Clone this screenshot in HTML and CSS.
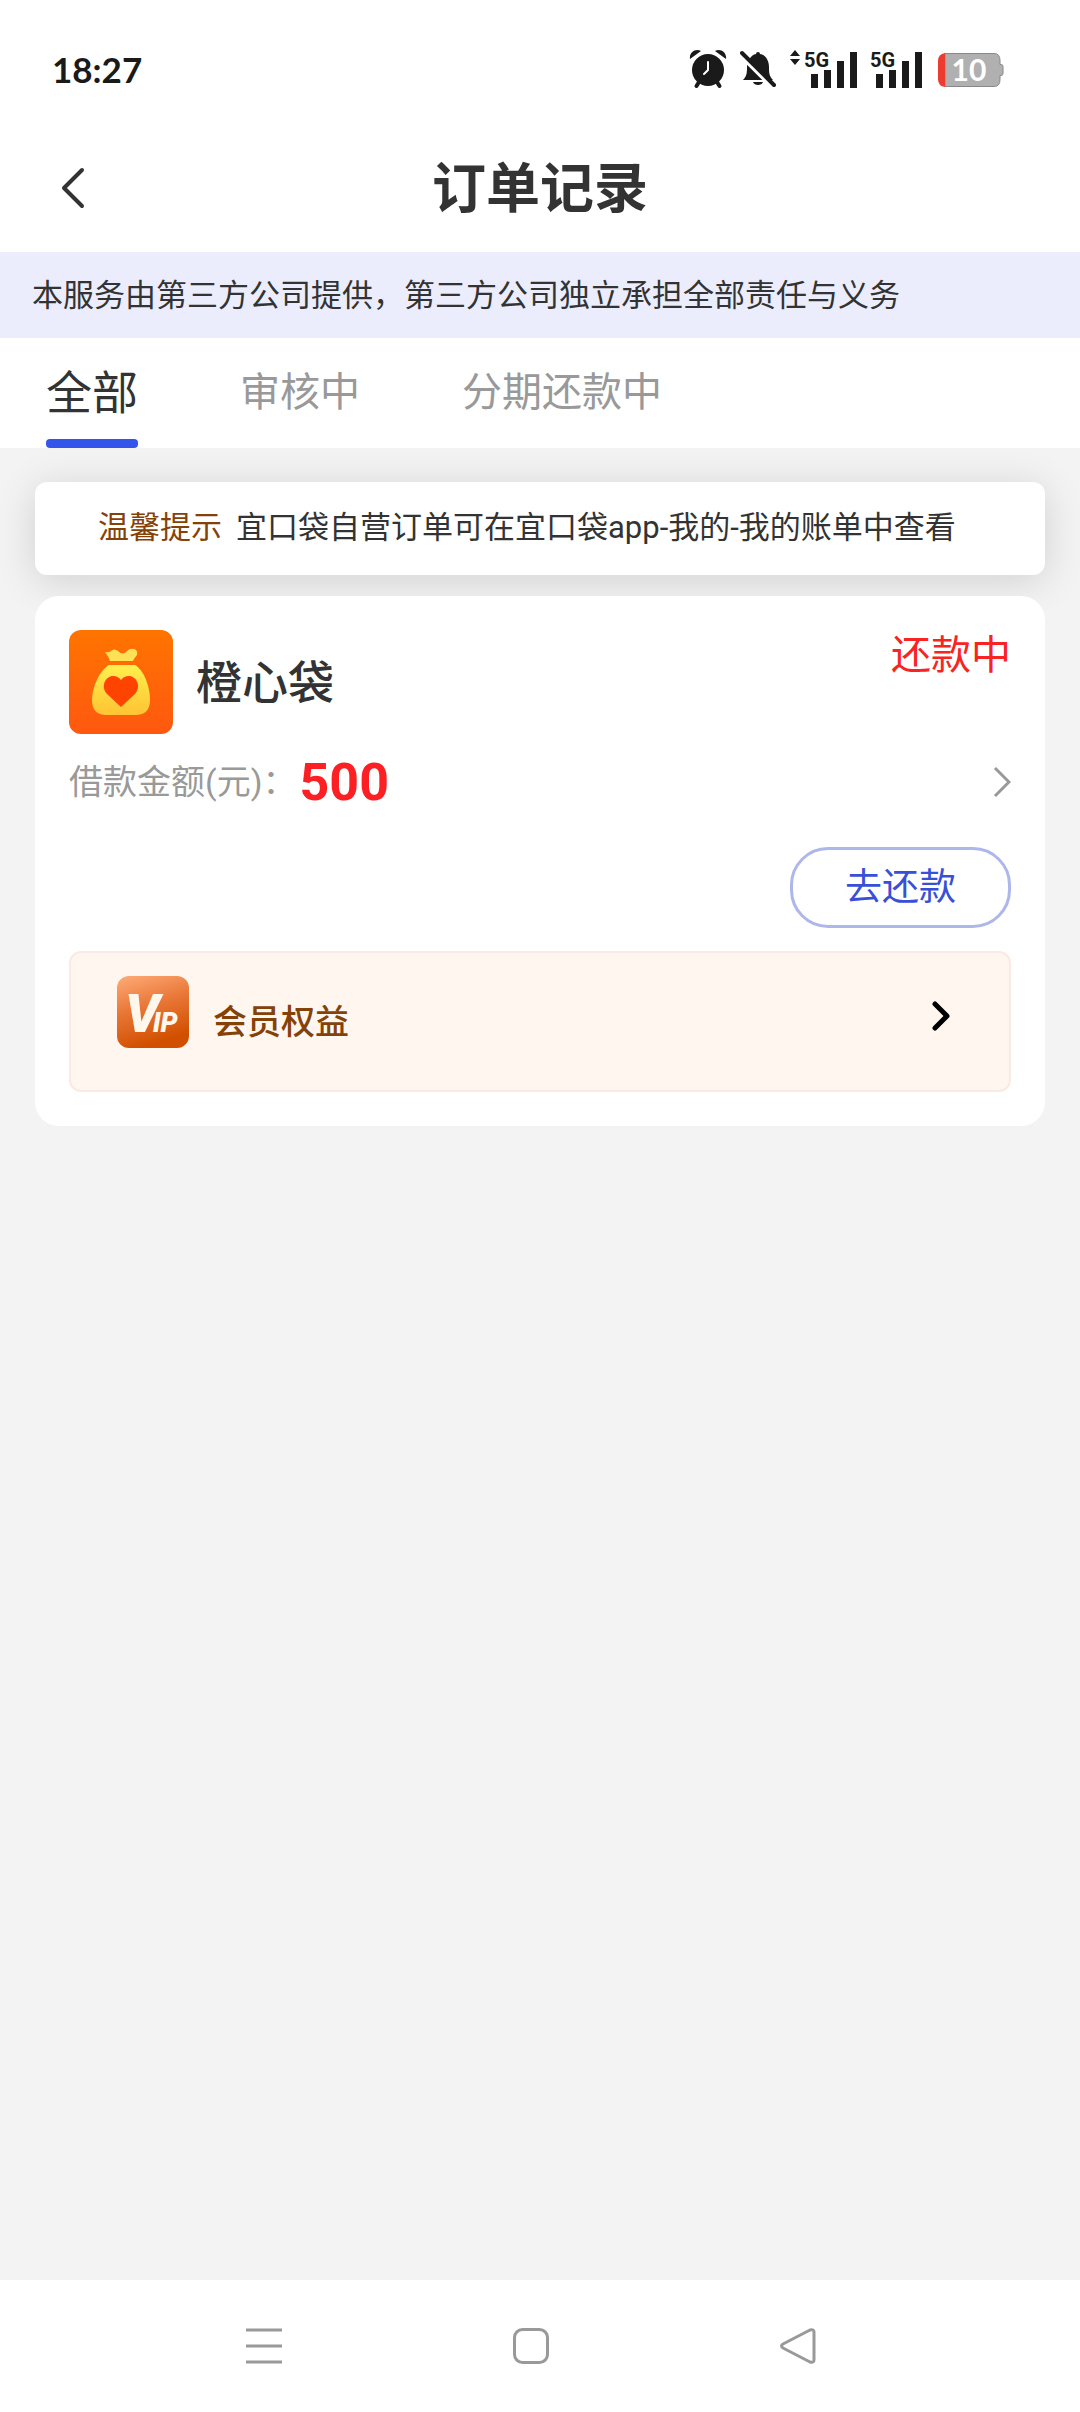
FILE: index.html
```html
<!DOCTYPE html>
<html lang="zh-CN">
<head>
  <meta charset="utf-8">
  <meta name="viewport" content="width=device-width, initial-scale=1">
  <title>订单记录</title>
  <link rel="stylesheet" href="styles.css">
</head>
<body>
  <div class="status-bar">
    <time class="clock">18:27</time>
    <div class="status-icons">
      <svg width="38" height="40" viewBox="0 0 38 40" aria-label="闹钟">
        <g fill="none" stroke="#1a1a1a" stroke-width="4" stroke-linecap="round">
          <path d="M10 33 7.500 37M28 33l2.500 4"/>
        </g>
        <path fill="#1a1a1a" d="M1 10C0 4 6-1 12 2zM37 10c1-6-5-11-11-8z"/>
        <circle cx="19" cy="21" r="16" fill="#1a1a1a"/>
        <path d="M19 13v8l-4 4" fill="none" stroke="#fff" stroke-width="2" stroke-linecap="round"/>
      </svg>
      <svg width="36" height="40" viewBox="0 0 36 40" aria-label="静音">
        <path fill="#1a1a1a" d="M3 31c4-4 4-8 4-13 0-6 4-12 9-13a2 2 0 0 1 4 0c6 1 9 7 9 13 0 5 0 9 4 13zM13 33h10c-1 4-9 4-10 0z"/>
        <path d="M1 7 32 38" stroke="#fff" stroke-width="4"/>
        <path d="M2 4 34 36" stroke="#1a1a1a" stroke-width="4" stroke-linecap="round"/>
      </svg>
      <svg width="68" height="56" viewBox="0 -8 68 56" aria-label="5G 信号">
        <path fill="#1a1a1a" d="M1 7 6 1l5 6zM1 10h10l-5 6z"/>
        <text x="15" y="18" class="net">5G</text>
        <path fill="#1a1a1a" d="M22 25h7v14h-7zM35 21h7v18h-7zM48 12h7v27h-7zM61 3h7v36h-7z"/>
      </svg>
      <svg width="52" height="56" viewBox="0 -8 52 56" aria-label="5G 信号">
        <text x="0" y="18" class="net">5G</text>
        <path fill="#1a1a1a" d="M6 25h7v14H6zM19 21h7v18h-7zM32 12h7v27h-7zM45 3h7v36h-7z"/>
      </svg>
      <svg width="69" height="40" viewBox="-3 0 69 40" aria-label="电量 10%">
        <path fill="#b0b0b0" stroke="#888" d="M7 4.500h49q6 0 6 7v4h1q2 0 2 2v7q0 2-2 2h-1v4q0 7-6 7H7z"/>
        <path fill="#ee3b2f" d="M7 4v34q-7-1-7-8V12q0-7 7-8z"/>
        <text x="31" y="32" class="level">10</text>
      </svg>
    </div>
  </div>

  <header class="header">
    <button class="back" type="button" aria-label="返回">
      <svg width="24" height="42" viewBox="0 0 24 42"><path d="M21 3 3 21l18 18" fill="none" stroke="#333" stroke-width="4" stroke-linecap="round" stroke-linejoin="round"/></svg>
    </button>
    <h1 class="title">订单记录</h1>
  </header>

  <p class="notice">本服务由第三方公司提供，第三方公司独立承担全部责任与义务</p>

  <nav class="tabs">
    <button class="tab tab-active" type="button">全部</button>
    <button class="tab" type="button">审核中</button>
    <button class="tab" type="button">分期还款中</button>
  </nav>

  <main class="content">
    <p class="tip"><strong class="tip-label">温馨提示</strong><span>宜口袋自营订单可在宜口袋app-我的-我的账单中查看</span></p>

    <article class="card">
      <div class="card-head">
        <svg class="logo" width="104" height="104" viewBox="0 0 104 104" aria-hidden="true">
          <defs>
            <linearGradient id="orange" x2="0" y2="1"><stop stop-color="#ff7400"/><stop offset="1" stop-color="#ff5810"/></linearGradient>
            <linearGradient id="gold" x2="0" y2="1"><stop stop-color="#fff04e"/><stop offset="1" stop-color="#ffc333"/></linearGradient>
          </defs>
          <rect width="104" height="104" rx="12" fill="url(#orange)"/>
          <path fill="#ffe158" d="M36 22q4 1 6-1 3-3 7 0 5 5 9 0 3-3 7-2 4 1 3 6-2 2-4 6H41q-1-4-5-9z"/>
          <path fill="url(#gold)" d="M40 35h26c9 5 15 22 15 35q0 14-13 15H36Q23 84 23 70c0-13 8-30 17-35z"/>
          <path fill="#ff4300" d="M52 77 38 64c-7-8-1-18 6-18q5 0 8 4 3-4 8-4c7 0 13 10 6 18z"/>
        </svg>
        <h2 class="name">橙心袋</h2>
        <span class="state">还款中</span>
      </div>
      <a class="amount" href="#order">
        <span class="amount-label">借款金额(元)：</span>
        <strong class="amount-value">500</strong>
        <svg class="push" width="18" height="32" viewBox="0 0 18 32" aria-hidden="true"><path d="m2 2 14 14L2 30" fill="none" stroke="#999" stroke-width="3"/></svg>
      </a>
      <button class="repay" type="button">去还款</button>
      <a class="vip" href="#vip">
        <svg class="vip-icon" width="72" height="72" viewBox="0 0 72 72" aria-hidden="true">
          <defs><linearGradient id="copper" x2=".3" y2="1"><stop stop-color="#ffab78"/><stop offset=".5" stop-color="#e87636"/><stop offset="1" stop-color="#d15000"/></linearGradient></defs>
          <rect width="72" height="72" rx="12" fill="url(#copper)"/>
          <text x="8" y="56" class="vip-v">V<tspan class="vip-ip" dx="-7">IP</tspan></text>
        </svg>
        <span class="vip-label">会员权益</span>
        <svg class="push vip-push" width="18" height="30" viewBox="0 0 18 30" aria-hidden="true"><path d="m3 3 12 12L3 27" fill="none" stroke="#000" stroke-width="5" stroke-linecap="round" stroke-linejoin="round"/></svg>
      </a>
    </article>
  </main>

  <footer class="system-nav">
    <button type="button" aria-label="最近任务">
      <svg width="36" height="36" viewBox="0 0 36 36"><path d="M0 2h36M0 18h36M0 34h36" stroke="#999" stroke-width="3"/></svg>
    </button>
    <button type="button" aria-label="主页">
      <svg width="36" height="36" viewBox="0 0 36 36"><rect x="1.500" y="1.500" width="33" height="33" rx="8" fill="none" stroke="#999" stroke-width="3"/></svg>
    </button>
    <button type="button" aria-label="返回">
      <svg width="36" height="36" viewBox="0 0 36 36"><path d="M3 16 30 2q4-1 4 2v28q0 3-4 2L3 20q-3-2 0-4z" fill="none" stroke="#999" stroke-width="3" stroke-linejoin="round"/></svg>
    </button>
  </footer>
</body>
</html>
```

FILE: styles.css
```css
* {
  box-sizing: border-box;
}

body {
  display: flex;
  flex-direction: column;
  min-height: 100vh;
  margin: 0;
  background: #f3f3f3;
  color: #333;
  font-family: Roboto, "Noto Sans CJK SC", sans-serif;
  font-size: 31px;
}

h1,
h2,
p {
  margin: 0;
}

button {
  padding: 0;
  border: 0;
  background: none;
  color: inherit;
  font: inherit;
}

a {
  color: inherit;
  text-decoration: none;
}

svg {
  display: block;
  flex: none;
}

.status-bar {
  display: flex;
  align-items: center;
  justify-content: space-between;
  height: 124px;
  padding: 14px 76px 0 52px;
  background: #fff;
}

.clock {
  color: #1a1a1a;
  font-family: Lato, sans-serif;
  font-size: 35px;
  font-weight: 700;
}

.status-icons {
  display: flex;
  align-items: center;
  gap: 13px;
}

.net {
  fill: #1a1a1a;
  font: 700 20px "Liberation Sans Narrow", Roboto, sans-serif;
}

.level {
  fill: #fff;
  font: 700 30px Lato, sans-serif;
  text-anchor: middle;
}

.header {
  display: grid;
  grid-template-columns: 1fr auto 1fr;
  align-items: center;
  height: 128px;
  padding: 0 61px;
  background: #fff;
}

.back {
  justify-self: start;
}

.title {
  padding-top: 4px;
  font-size: 54px;
  font-weight: 700;
  line-height: 64px;
}

.notice {
  padding: 20px 32px 18px;
  background: #ebedfc;
  line-height: 48px;
}

.tabs {
  display: flex;
  gap: 102px;
  height: 110px;
  padding: 0 46px;
  background: #fff;
}

.tab {
  border-bottom: 9px solid transparent;
  color: #999;
  font-size: 40px;
}

.tab-active {
  position: relative;
  color: #333;
  font-size: 46px;
}

.tab-active::after {
  content: "";
  position: absolute;
  right: 0;
  bottom: -9px;
  left: 0;
  height: 9px;
  border-radius: 4px;
  background: #3355ea;
}

.content {
  display: flex;
  flex: 1;
  flex-direction: column;
  gap: 21px;
  padding: 34px 35px;
}

.tip {
  display: flex;
  gap: 14px;
  padding: 22px 24px 23px 63px;
  border-radius: 12px;
  background: #fff;
  box-shadow: 0 6px 40px rgba(0, 0, 0, 0.14);
  line-height: 48px;
}

.tip-label {
  color: #854208;
  font-weight: 400;
}

.card {
  position: relative;
  display: flex;
  flex-direction: column;
  padding: 34px;
  border-radius: 24px;
  background: #fff;
}

.card-head {
  display: flex;
  align-items: center;
  gap: 23px;
}

.name {
  padding-bottom: 6px;
  font-size: 46px;
  font-weight: 500;
}

.state {
  align-self: flex-start;
  margin-left: auto;
  color: #fa2323;
  font-size: 40px;
  line-height: 52px;
}

.amount {
  display: flex;
  align-items: center;
  gap: 3px;
  height: 96px;
}

.amount-label {
  padding-bottom: 5px;
  color: #999;
  font-size: 34px;
}

.amount-value {
  color: #fc2024;
  font-size: 52px;
  font-weight: 700;
}

.push {
  margin-left: auto;
}

.repay {
  align-self: flex-end;
  margin: 17px 0 23px;
  padding: 14px 52px 13px;
  border: 3px solid #adb7ea;
  border-radius: 38px;
  color: #3850d8;
  font-size: 37px;
  line-height: 48px;
}

.vip {
  display: flex;
  align-items: center;
  gap: 24px;
  padding: 23px 59px 22px 46px;
  border: 2px solid #fbeae1;
  border-radius: 12px;
  background: #fff6f0;
}

.vip-icon {
  margin-bottom: 20px;
}

.vip-label {
  color: #854208;
  font-size: 34px;
  font-weight: 500;
  line-height: 48px;
}

.vip-push {
  margin-bottom: 12px;
}

.vip-v {
  fill: #fff6ec;
  font: italic 900 54px Roboto, sans-serif;
}

.vip-ip {
  font-size: 27px;
}

.system-nav {
  display: grid;
  grid-template-columns: repeat(3, 1fr);
  align-items: center;
  justify-items: center;
  height: 132px;
  padding: 0 148px 0 130px;
  background: #fff;
}
```
